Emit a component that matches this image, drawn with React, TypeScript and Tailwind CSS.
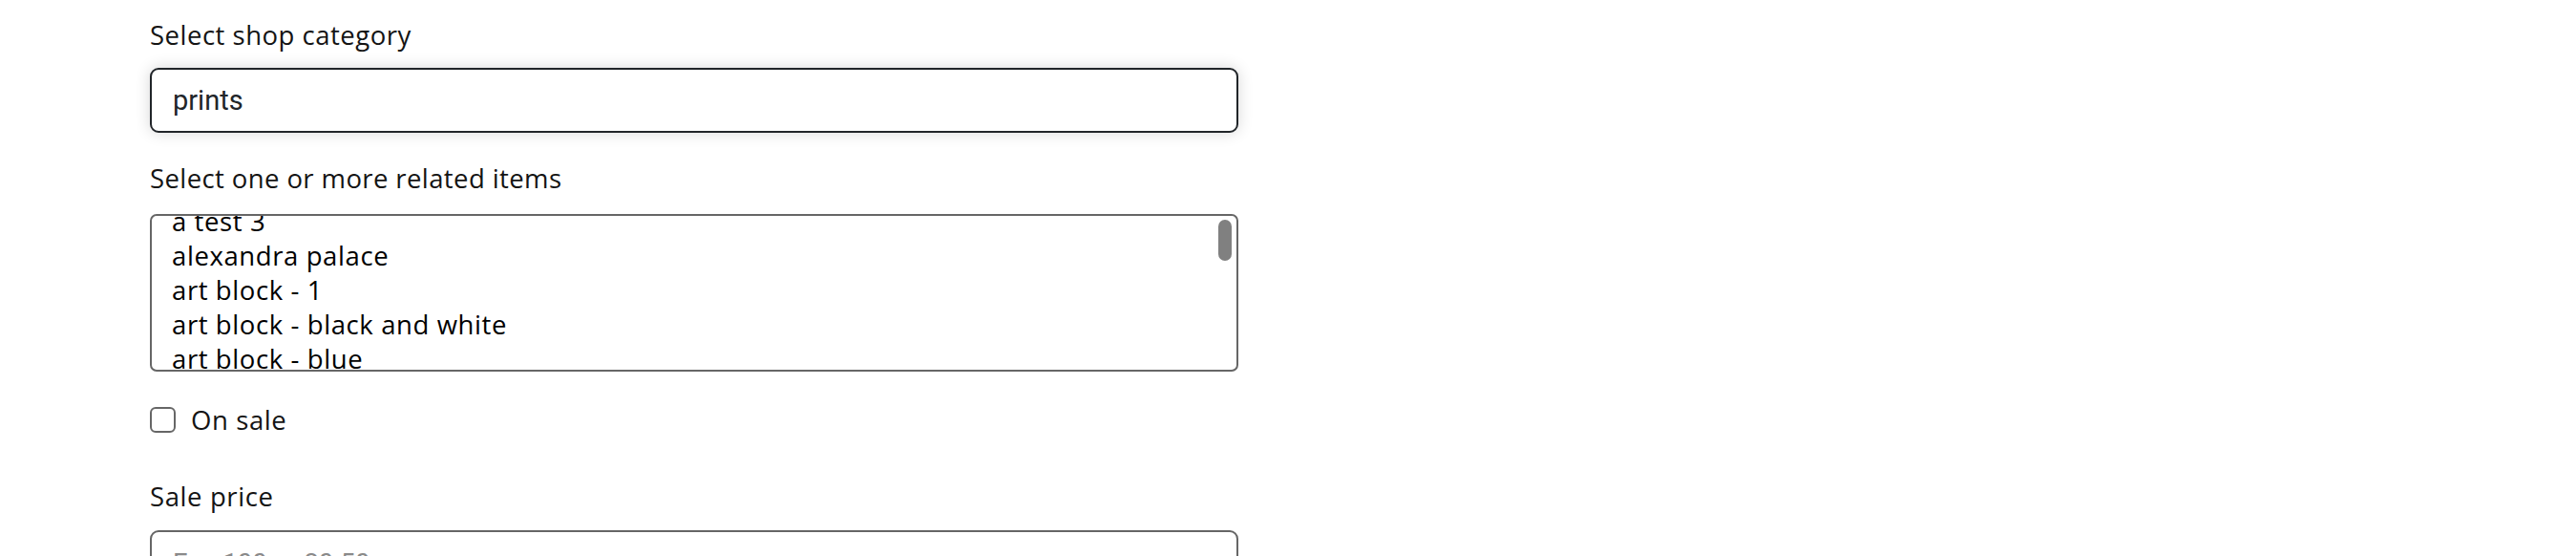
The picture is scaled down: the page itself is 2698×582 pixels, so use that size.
import { useState } from "react"

const items = [
  "a test 3",
  "alexandra palace",
  "art block - 1",
  "art block - black and white",
  "art block - blue",
  "art block - green",
]

export default function App() {
  const [category, setCategory] = useState("prints")
  const [onSale, setOnSale] = useState(false)
  const [price, setPrice] = useState("")

  return (
    <div className="min-h-[582px] w-full bg-white font-['Open_Sans',sans-serif] text-[27.5px] text-[#141414]">
      <form className="ml-[157px] flex w-[1140px] flex-col pt-[16px]">
        <label className="mb-[14px] leading-[41px] tracking-[0.5px]">Select shop category</label>
        <input
          value={category}
          onChange={(e) => setCategory(e.target.value)}
          className="h-[68px] rounded-[9px] border-2 border-[#212529] bg-white px-[22px] font-['Roboto',sans-serif] text-[29px] text-[#212529] shadow-[0_0_16px_rgba(0,0,0,0.16)] outline-none"
        />

        <label className="mt-[27px] mb-[17px] leading-[41px] tracking-[0.4px]">Select one or more related items</label>
        <div className="relative h-[165px] overflow-hidden rounded-[7px] border-2 border-[#666666] bg-white">
          <ul className="-mt-[12px] pl-[21px] leading-[35.9px] tracking-[0.6px] text-black">
            {items.map((item) => (
              <li key={item}>{item}</li>
            ))}
          </ul>
          <div className="absolute top-[4px] right-[5px] h-[43px] w-[14px] rounded-full bg-[#808080]" />
        </div>

        <div className="mt-[30px] flex h-[41px] items-center gap-[16px]">
          <button
            type="button"
            onClick={() => setOnSale(!onSale)}
            className="h-[27px] w-[27px] rounded-[6px] border-2 border-[#666666] bg-white"
          />
          <span className="leading-[41px] tracking-[0.6px]">On sale</span>
        </div>

        <label className="mt-[39px] mb-[15px] leading-[41px] tracking-[0.6px]">Sale price</label>
        <input
          value={price}
          onChange={(e) => setPrice(e.target.value)}
          placeholder="E.g. 100 or 20.50"
          className="h-[68px] rounded-[9px] border-2 border-[#666666] bg-white px-[22px] font-['Roboto',sans-serif] text-[27.5px] text-[#212529] outline-none placeholder:text-[#8a8a8a]"
        />
      </form>
    </div>
  )
}
